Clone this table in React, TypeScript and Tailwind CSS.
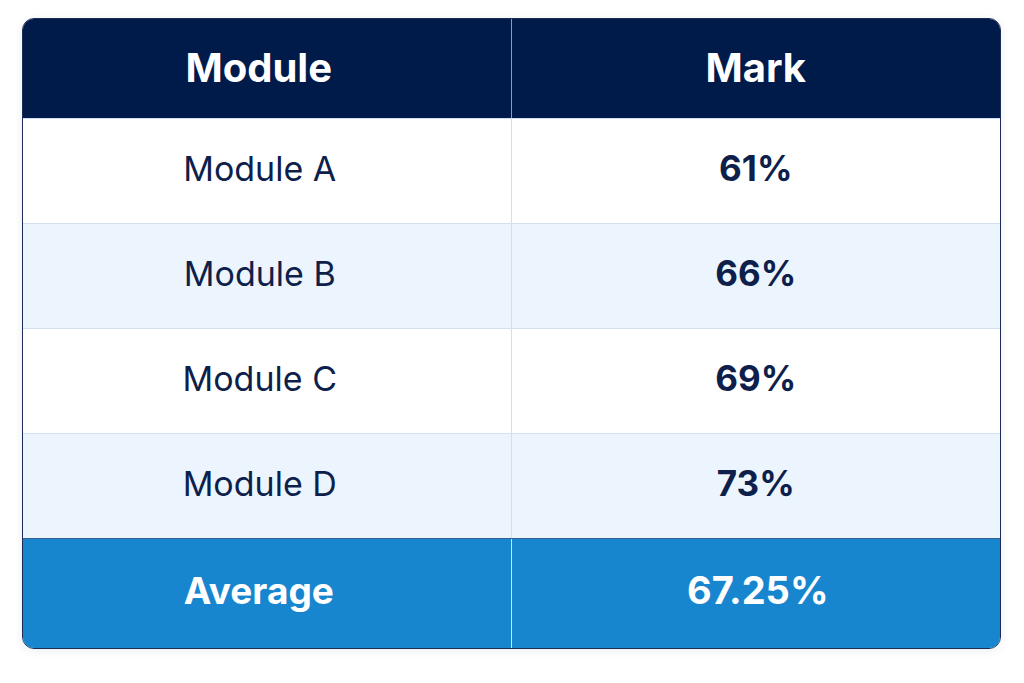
import React from "react";

const rows = [
  { name: "Module A", mark: "61%" },
  { name: "Module B", mark: "66%" },
  { name: "Module C", mark: "69%" },
  { name: "Module D", mark: "73%" },
];

export default function App() {
  return (
    <div
      className="w-[1024px] h-[683px] bg-white pt-[18px] pl-[22px]"
      style={{ fontFamily: "Inter, 'Liberation Sans', sans-serif" }}
    >
      <div className="w-[979px] rounded-[12px] border border-[#1c2d55] overflow-hidden shadow-[0_2px_10px_rgba(15,40,90,0.08)]">
        <div className="grid grid-cols-2 h-[99px] bg-[#001a4a] text-white">
          <div className="flex items-center justify-center pr-[16px] pb-[2px] text-[40px] font-bold border-r border-[#8a9bc0]">
            Module
          </div>
          <div className="flex items-center justify-center pb-[2px] text-[40px] font-bold">
            Mark
          </div>
        </div>
        {rows.map((r, i) => (
          <div
            key={r.name}
            className={`grid grid-cols-2 h-[105px] border-t border-[#d3e0f0] text-[#0e1f4b] ${
              i % 2 === 1 ? "bg-[#ecf4fd]" : "bg-white"
            }`}
          >
            <div className="flex items-center justify-center pr-[14px] pb-[6px] text-[34px] font-normal border-r border-[#d3e0f0]">
              {r.name}
            </div>
            <div className="flex items-center justify-center pb-[6px] text-[35px] font-bold">
              {r.mark}
            </div>
          </div>
        ))}
        <div className="grid grid-cols-2 h-[110px] bg-[#1886cf] text-white border-t border-[#3a5f95]">
          <div className="flex items-center justify-center pr-[16px] pb-[6px] text-[37px] font-bold border-r border-[#cfe4f5]">
            Average
          </div>
          <div className="flex items-center justify-center pl-[4px] pb-[6px] text-[38px] font-bold">
            67.25%
          </div>
        </div>
      </div>
    </div>
  );
}
